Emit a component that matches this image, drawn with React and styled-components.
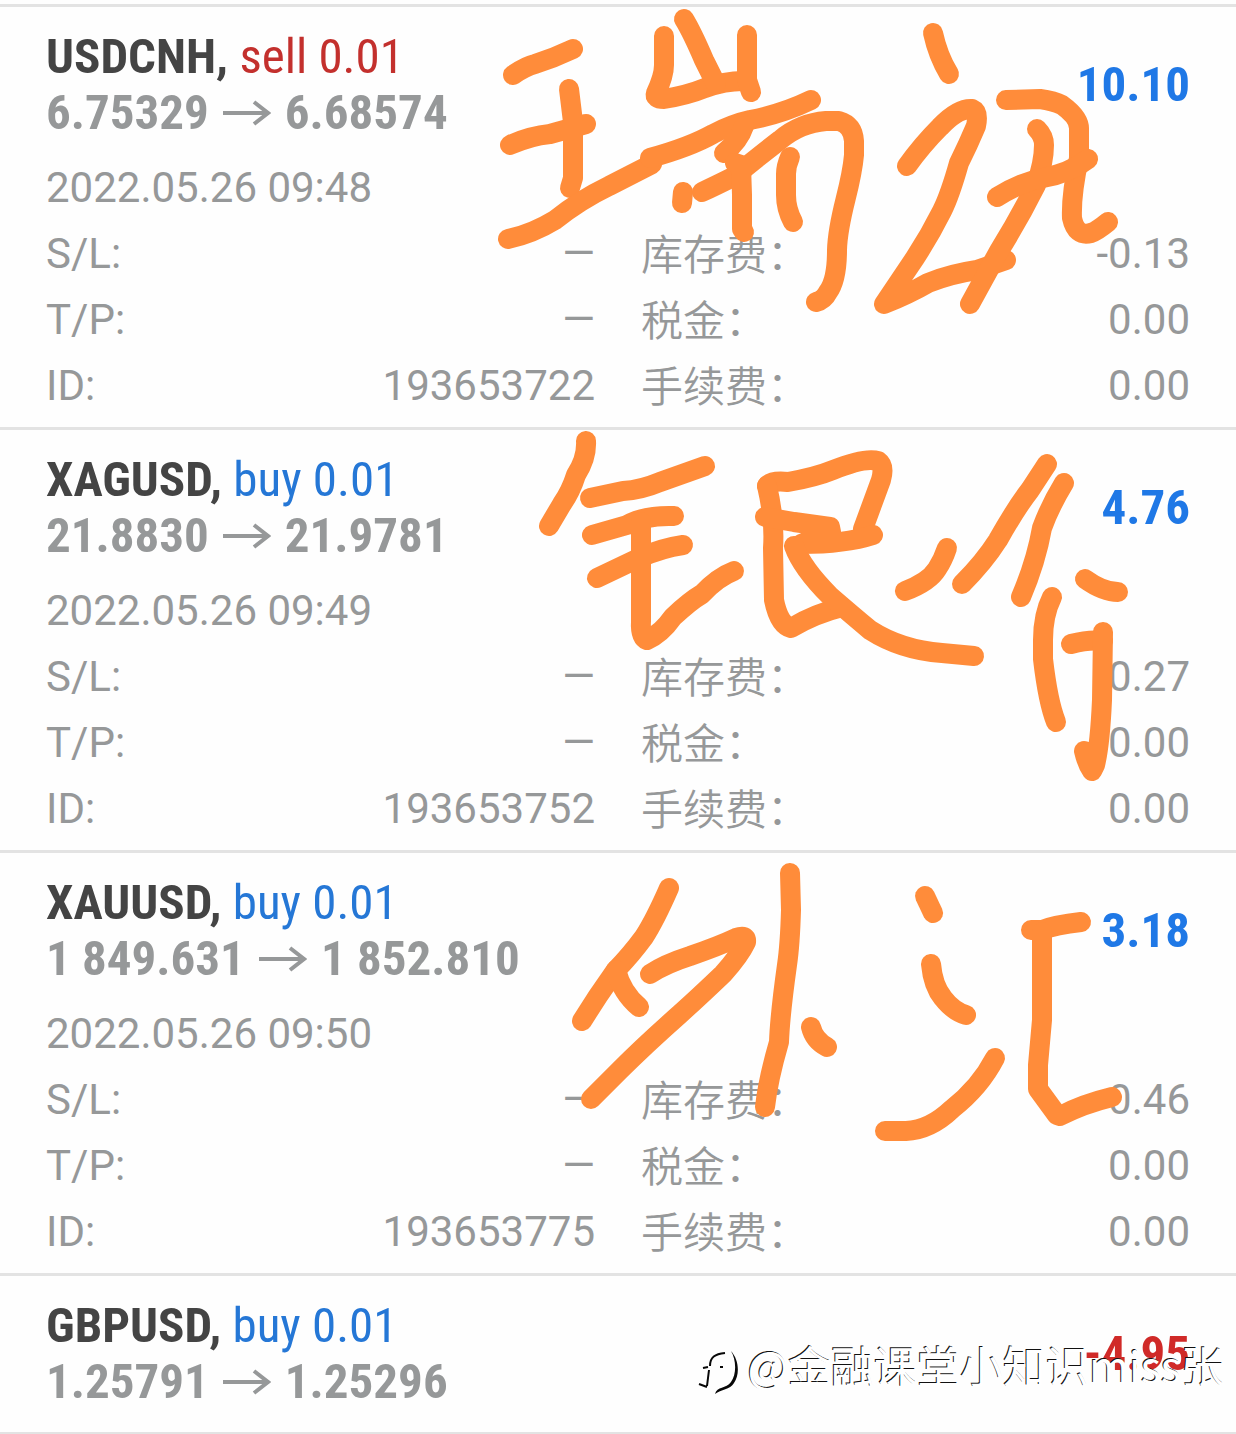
import React from "react";
import styled, { createGlobalStyle } from "styled-components";

const GlobalStyle = createGlobalStyle`
  *, *::before, *::after { box-sizing: border-box; }
  body { margin: 0; background: #fefefe; }
`;

const condensed = '"Roboto Condensed", Roboto, "Liberation Sans", sans-serif';
const regular = 'Roboto, "Liberation Sans", "Noto Sans CJK SC", sans-serif';
const labelFont = 'Roboto, "Noto Sans CJK SC", sans-serif';
const chinese = '"Noto Sans CJK SC", "Noto Sans", sans-serif';

const Page = styled.main`
  position: relative;
  padding-top: 4px;
  overflow: hidden;
  color: #969899;
  font-family: ${regular};
`;

const Deals = styled.ul`
  margin: 0;
  padding: 0;
  list-style: none;
  border-bottom: 2px solid #e3e3e3;
`;

const Deal = styled.li`
  padding: 0 46px;
  border-top: 3px solid #e3e3e3;
`;

const Summary = styled.header`
  display: flex;
  align-items: center;
  justify-content: space-between;
  padding: 22px 0 ${(p) => (p.$open ? 14 : 22)}px;
  font-family: ${condensed};
  font-size: 49px;
  line-height: 56px;
`;

const Title = styled.h2`
  margin: 0;
  color: #444;
  font-size: 49px;
  font-weight: 700;
`;

const Side = styled.span`
  color: ${(p) => (p.$side === "sell" ? "#c3302d" : "#2577d6")};
  font-weight: 400;
`;

const Prices = styled.p`
  display: flex;
  align-items: center;
  gap: 14px;
  margin: 0;
  font-weight: 700;
`;

const Arrow = styled.svg`
  width: 48px;
  height: 28px;
  fill: none;
  stroke: currentColor;
  stroke-width: 4;
`;

const Profit = styled.strong`
  color: ${(p) => (p.$loss ? "#d02a28" : "#1f78e6")};
  font-weight: 700;
`;

const Details = styled.div`
  padding-bottom: 8px;
  font-size: 42px;
  line-height: 66px;
`;

const Time = styled.time`
  display: block;
`;

const Fields = styled.dl`
  display: grid;
  grid-template-columns: 1fr 1fr;
  column-gap: 46px;
  margin: 0;
`;

const Field = styled.div`
  display: flex;
  justify-content: space-between;
  height: 66px;
`;

const Label = styled.dt`
  padding-top: ${(p) => (p.$chinese ? 2 : 0)}px;
  font-family: ${labelFont};
  font-weight: ${(p) => (p.$chinese ? 350 : 400)};
`;

const Value = styled.dd`
  margin: 0;
`;

const Ink = styled.svg`
  position: absolute;
  top: 0;
  left: 0;
  width: 100%;
  fill: none;
  stroke: #ff8c3a;
  stroke-width: 20;
  stroke-linecap: round;
  stroke-linejoin: round;
  pointer-events: none;
`;

const Watermark = styled.div`
  position: absolute;
  z-index: 2;
  right: 12px;
  bottom: 38px;
  display: flex;
  align-items: center;
  gap: 8px;
  color: #fff;
  font-family: ${chinese};
  font-size: 43px;
  font-weight: 400;
  line-height: 64px;
  text-shadow: -1px -1px 0 #111;
`;

const Logo = styled.svg`
  width: 42px;
  height: 64px;
  fill: none;
  stroke: #080808;
  stroke-width: 2;
`;

const deals = [
  { symbol: "USDCNH", side: "sell", open: "6.75329", close: "6.68574", profit: "10.10", time: "2022.05.26 09:48", id: "193653722", swap: "-0.13" },
  { symbol: "XAGUSD", side: "buy", open: "21.8830", close: "21.9781", profit: "4.76", time: "2022.05.26 09:49", id: "193653752", swap: "0.27" },
  { symbol: "XAUUSD", side: "buy", open: "1 849.631", close: "1 852.810", profit: "3.18", time: "2022.05.26 09:50", id: "193653775", swap: "0.46" },
  { symbol: "GBPUSD", side: "buy", open: "1.25791", close: "1.25296", profit: "-4.95" },
];

const strokes = [
  // 瑞
  "M513 75 Q526 66 535 64 Q554 58 573 49",
  "M510 145 Q530 136 550 134 L586 124",
  "M569 89 Q571 106 573 122 L573 178 L570 188",
  "M508 239 Q532 234 555 220 Q580 200 609 186 L652 164",
  "M650 158 Q690 147 713 134 Q732 124 750 120 Q782 114 811 100",
  "M664 36 L664 65 Q664 76 656 93 Q654 99 664 99 Q688 95 705 88 Q725 81 743 81",
  "M684 19 Q692 32 704 60 L716 84",
  "M747 35 L747 80 L751 92",
  "M744 126 Q739 141 724 153",
  "M683 192 L682 203",
  "M702 192 Q715 186 735 176 Q754 160 780 140 Q800 123 826 121 L839 121 Q853 125 854 141 L854 155 C851 190 838 215 837 250 Q837 280 828 292 Q824 300 816 302",
  "M735 163 L741 165 L742 195 L742 229 L744 232",
  "M790 157 Q786 166 786 174 L786 195 Q786 209 793 222",
  // 讯
  "M933 33 Q938 56 949 74",
  "M907 166 Q922 145 940 127 Q958 108 972 109 Q979 112 976 126 Q968 145 959 163 Q950 195 942 211 Q930 235 915 258 L884 304 Q909 294 928 283 Q950 274 977 270 L1006 260",
  "M1006 100 L1040 99 Q1054 101 1062 105 Q1080 118 1079 130 L1079 158 Q1071 195 1072 218 Q1076 237 1091 233 Q1097 231 1108 222",
  "M1037 129 Q1044 136 1044 145 Q1044 162 1036 185 Q1019 219 999 251 L970 304",
  "M997 197 Q1021 182 1043 178 Q1070 173 1088 159",
  // 银
  "M586 441 Q587 458 576 475 Q571 491 562 504 L549 526",
  "M590 498 L623 491 Q641 490 660 482 L705 466",
  "M592 535 L627 525 Q645 515 674 516",
  "M597 578 Q620 567 639 558 Q662 548 683 545",
  "M641 522 L641 621 Q640 637 647 640 Q661 634 673 617 Q690 601 702 594 Q718 577 734 571",
  "M767 486 Q771 480 788 482 Q816 477 833 470 Q865 457 878 461 Q885 466 881 480 L863 529",
  "M767 486 Q775 520 773 548 L774 600 Q779 625 791 628 Q814 614 842 607",
  "M765 517 L794 522 L830 527 L831 532 L801 544 Q845 544 873 535",
  "M794 546 Q802 568 830 596 Q852 615 870 630 Q901 650 942 653 L974 656",
  // 价
  "M905 591 Q929 582 937 569 Q943 560 947 548",
  "M962 584 Q984 562 998 540 Q1016 508 1030 490 L1047 464",
  "M1064 483 Q1050 506 1042 528 Q1036 562 1021 597",
  "M1052 597 Q1043 615 1043 640 L1043 659 Q1048 702 1056 722",
  "M1085 579 Q1103 592 1118 592",
  "M1071 644 Q1090 639 1103 641",
  "M1103 632 L1102 700 Q1100 745 1095 765 L1092 771 Q1087 764 1084 751 L1093 755",
  // 外
  "M669 888 Q655 920 644 937 Q630 956 616 970 L598 996 L582 1021",
  "M616 970 Q622 993 639 1007",
  "M650 974 Q665 964 690 956 Q719 946 736 938 Q747 934 746 942 Q740 955 723 974 Q700 996 680 1014 Q645 1045 620 1070 L591 1099",
  "M790 873 L791 910 Q790 945 787 965 Q780 1015 779 1042 Q768 1080 765 1107",
  "M811 1027 Q814 1040 827 1047",
  // 汇
  "M925 896 L933 913",
  "M931 964 Q933 986 943 998 Q953 1011 966 1015",
  "M885 1131 L906 1131 Q930 1130 952 1109 Q980 1087 995 1058",
  "M1031 930 L1042 930 Q1055 925 1081 922",
  "M1042 932 L1042 1020 L1038 1065 L1038 1089 L1057 1115 L1060 1116 Q1083 1104 1112 1097",
];

function DetailField({ label, value, chinese: isChinese }) {
  return (
    <Field>
      <Label $chinese={isChinese}>{label}</Label>
      <Value>{value}</Value>
    </Field>
  );
}

function DealCard({ deal }) {
  return (
    <Deal>
      <Summary $open={Boolean(deal.id)}>
        <div>
          <Title>
            {deal.symbol}, <Side $side={deal.side}>{deal.side} 0.01</Side>
          </Title>
          <Prices>
            <span>{deal.open}</span>
            <Arrow viewBox="0 0 48 28" aria-hidden="true">
              <path d="M0 14 H45 M31 3 L45 14 L31 25" />
            </Arrow>
            <span>{deal.close}</span>
          </Prices>
        </div>
        <Profit $loss={deal.profit.startsWith("-")}>{deal.profit}</Profit>
      </Summary>
      {deal.id && (
        <Details>
          <Time>{deal.time}</Time>
          <Fields>
            <DetailField label="S/L:" value="—" />
            <DetailField label="库存费：" value={deal.swap} chinese />
            <DetailField label="T/P:" value="—" />
            <DetailField label="税金：" value="0.00" chinese />
            <DetailField label="ID:" value={deal.id} />
            <DetailField label="手续费：" value="0.00" chinese />
          </Fields>
        </Details>
      )}
    </Deal>
  );
}

export default function App() {
  return (
    <Page>
      <GlobalStyle />
      <Deals>
        {deals.map((deal) => (
          <DealCard key={deal.symbol} deal={deal} />
        ))}
      </Deals>
      <Ink viewBox="0 0 1236 1434" aria-hidden="true">
        {strokes.map((d) => (
          <path key={d} d={d} />
        ))}
      </Ink>
      <Watermark>
        <Logo viewBox="0 -16 42 64" aria-hidden="true">
          <path d="M6 20 L11 19 M13 18 C13 9 18 6 28 5 M12 22 L10 38 M2 36 L10 39 M23 19 h3" />
          <path fill="#080808" stroke="none" d="M34 3 C39 11 40 26 34 34 C29 41 20 38 18 46 C24 41 33 42 37 35 C43 26 42 12 34 3" />
        </Logo>
        @金融课堂小知识miss张
      </Watermark>
    </Page>
  );
}
